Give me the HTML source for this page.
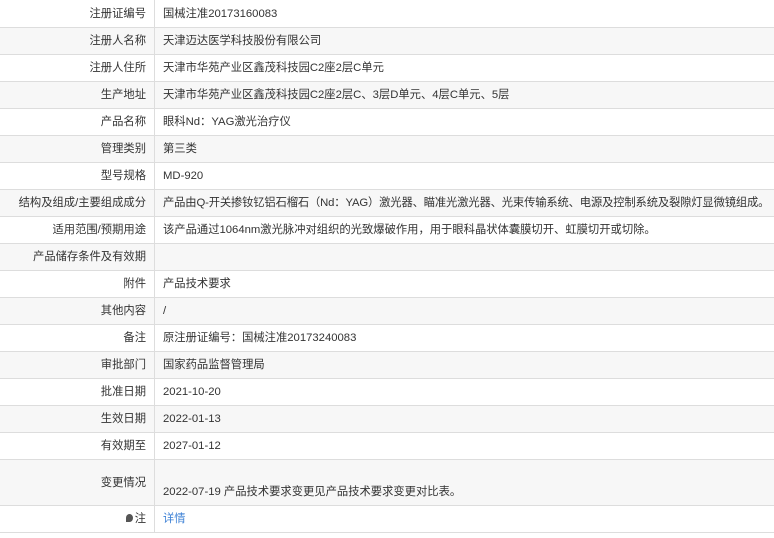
<!DOCTYPE html>
<html><head><meta charset="utf-8"><style>
body{margin:0;background:#fff;font-family:"Liberation Sans","Noto Sans CJK SC",sans-serif;font-size:11.3px;color:#333}
table{border-collapse:collapse;width:774px;table-layout:fixed}
td{border-bottom:1px solid #ddd;height:26px;padding:0;white-space:nowrap;overflow:hidden;line-height:14px}
td.l{width:146px;text-align:right;padding-right:8px;border-right:1px solid #ddd}
td.v{padding-left:8px}
tr:nth-child(even) td{background:#f7f7f7}
tr:first-child td{height:27px}
a{color:#3a7fd5;text-decoration:none}
</style></head><body>
<table>
<tr><td class="l">注册证编号</td><td class="v">国械注准20173160083</td></tr>
<tr><td class="l">注册人名称</td><td class="v">天津迈达医学科技股份有限公司</td></tr>
<tr><td class="l">注册人住所</td><td class="v">天津市华苑产业区鑫茂科技园C2座2层C单元</td></tr>
<tr><td class="l">生产地址</td><td class="v">天津市华苑产业区鑫茂科技园C2座2层C、3层D单元、4层C单元、5层</td></tr>
<tr><td class="l">产品名称</td><td class="v">眼科Nd：YAG激光治疗仪</td></tr>
<tr><td class="l">管理类别</td><td class="v">第三类</td></tr>
<tr><td class="l">型号规格</td><td class="v">MD-920</td></tr>
<tr><td class="l">结构及组成/主要组成成分</td><td class="v" style="letter-spacing:-0.15px">产品由Q-开关掺钕钇铝石榴石（Nd：YAG）激光器、瞄准光激光器、光束传输系统、电源及控制系统及裂隙灯显微镜组成。</td></tr>
<tr><td class="l">适用范围/预期用途</td><td class="v">该产品通过1064nm激光脉冲对组织的光致爆破作用，用于眼科晶状体囊膜切开、虹膜切开或切除。</td></tr>
<tr><td class="l">产品储存条件及有效期</td><td class="v"></td></tr>
<tr><td class="l">附件</td><td class="v">产品技术要求</td></tr>
<tr><td class="l">其他内容</td><td class="v">/</td></tr>
<tr><td class="l">备注</td><td class="v">原注册证编号：国械注准20173240083</td></tr>
<tr><td class="l">审批部门</td><td class="v">国家药品监督管理局</td></tr>
<tr><td class="l">批准日期</td><td class="v">2021-10-20</td></tr>
<tr><td class="l">生效日期</td><td class="v">2022-01-13</td></tr>
<tr><td class="l">有效期至</td><td class="v">2027-01-12</td></tr>
<tr><td class="l" style="height:45px">变更情况</td><td class="v" style="height:39px;vertical-align:bottom;padding-bottom:6px">2022-07-19 产品技术要求变更见产品技术要求变更对比表。</td></tr>
<tr><td class="l"><span style="display:inline-block;width:7px;height:8px;border-radius:50% 50% 50% 0;background:#555;margin-right:2px"></span>注</td><td class="v"><a>详情</a></td></tr>
</table>
</body></html>
